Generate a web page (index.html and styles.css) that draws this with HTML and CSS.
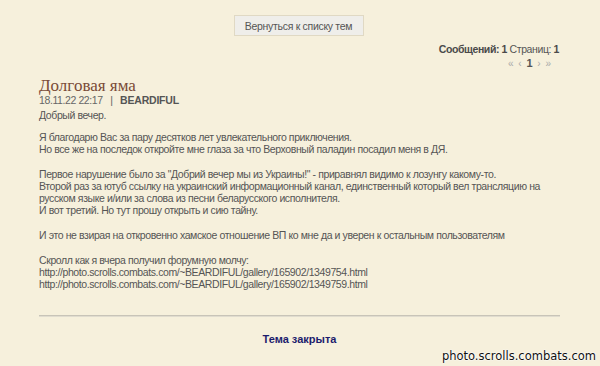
FILE: index.html
```html
<!DOCTYPE html>
<html lang="ru">
<head>
    <meta charset="UTF-8">
    <title>Долговая яма</title>
    <link rel="stylesheet" href="styles.css">
</head>
<body>
<div class="page">
    <div class="back-row">
        <button class="back-btn">Вернуться к списку тем</button>
    </div>

    <div class="topic-info">
        <div class="counts"><b>Сообщений: 1</b> Страниц: <b>1</b></div>
        <div class="pager">
            <span class="arrow">«</span>
            <span class="arrow">‹</span>
            <b>1</b>
            <span class="arrow">›</span>
            <span class="arrow">»</span>
        </div>
    </div>

    <div class="post">
        <h1 class="post-title">Долговая яма</h1>
        <div class="post-meta">18.11.22 22:17 <span class="sep">|</span> <b>BEARDIFUL</b></div>
        <div class="post-body">
            <p class="greeting">Добрый вечер.</p>
            <p>Я благодарю Вас за пару десятков лет увлекательного приключения.<br>
            Но все же на последок откройте мне глаза за что Верховный паладин посадил меня в ДЯ.</p>
            <p>Первое нарушение было за "Добрий вечер мы из Украины!" - приравнял видимо к лозунгу какому-то.<br>
            Второй раз за ютуб ссылку на украинский информационный канал, единственный который вел трансляцию на<br>
            русском языке и/или за слова из песни беларусского исполнителя.<br>
            И вот третий. Но тут прошу открыть и сию тайну.</p>
            <p>И это не взирая на откровенно хамское отношение ВП ко мне да и уверен к остальным пользователям</p>
            <p>Скролл как я вчера получил форумную молчу:<br>
            http://photo.scrolls.combats.com/~BEARDIFUL/gallery/165902/1349754.html<br>
            http://photo.scrolls.combats.com/~BEARDIFUL/gallery/165902/1349759.html</p>
        </div>
    </div>

    <div class="divider"></div>
    <div class="closed">Тема закрыта</div>
</div>
<div class="watermark">photo.scrolls.combats.com</div>
</body>
</html>
```

FILE: styles.css
```css
* {
    margin: 0;
    padding: 0;
    box-sizing: border-box;
}
body {
    font-family: 'Liberation Sans', Arial, sans-serif;
    font-size: 10.5px;
    letter-spacing: -0.4px;
    background: #f6f0dc;
    color: #555;
    height: 366px;
    overflow: hidden;
    position: relative;
}
.page {
    padding: 0 40px 0 39px;
}
.back-row {
    display: flex;
    justify-content: center;
    padding-top: 15px;
}
.back-btn {
    font-family: inherit;
    font-size: 10.5px;
    letter-spacing: -0.3px;
    color: #555;
    background: #efeeea;
    border: 1px solid #e0d9c4;
    width: 130px;
    height: 21px;
    margin-left: -2px;
}
.topic-info {
    text-align: right;
    padding-top: 6px;
    padding-right: 1px;
}
.counts {
    font-size: 10.5px;
    line-height: 14px;
}
.counts b {
    color: #4a4a4a;
}
.pager {
    color: #aaa;
    font-size: 10px;
    letter-spacing: 0;
    line-height: 15px;
    padding-right: 8px;
    word-spacing: 2px;
}
.pager b {
    color: #555;
    font-size: 11px;
}
.post {
    padding-top: 6px;
}
.post-title {
    font-family: 'Liberation Serif', 'DejaVu Serif', serif;
    font-weight: normal;
    font-size: 17px;
    letter-spacing: 0;
    line-height: 18px;
    color: #7a4b37;
}
.post-meta {
    margin-top: -2px;
    line-height: 14px;
    color: #666;
}
.post-meta .sep {
    padding: 0 5px;
}
.post-meta b {
    color: #555;
    letter-spacing: -0.2px;
}
.post-body {
    padding-top: 2px;
    line-height: 12px;
}
.post-body p {
    margin-bottom: 13px;
}
.post-body .greeting {
    margin-bottom: 10px;
}
.divider {
    height: 2px;
    margin-top: 25px;
    background: #c8c4b8;
    border-bottom: 1px solid #e0dccf;
}
.closed {
    text-align: center;
    font-size: 11px;
    letter-spacing: 0;
    font-weight: bold;
    color: #1c1c6c;
    padding-top: 16px;
}
.watermark {
    position: absolute;
    right: 4px;
    bottom: 3px;
    font-family: 'DejaVu Sans', sans-serif;
    font-size: 11.5px;
    letter-spacing: 0;
    color: #111;
    text-shadow: 0 0 2px #fff, 0 0 2px #fff, 0 0 1px #fff;
}
```
